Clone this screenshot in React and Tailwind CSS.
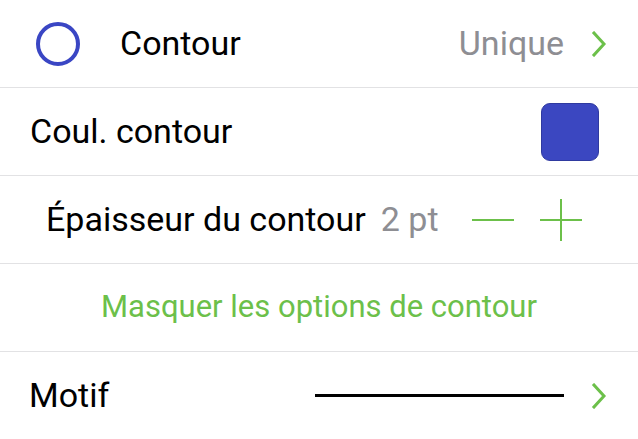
import { useState } from 'react';

const font = { fontFamily: 'Roboto, "Noto Sans", sans-serif' };

function Chevron() {
  return (
    <svg width="16" height="26" viewBox="0 0 16 26" className="shrink-0">
      <path d="M3 2 L13 13 L3 24" fill="none" stroke="#6cc04a" strokeWidth="3" strokeLinecap="square" />
    </svg>
  );
}

function Row({ children, className = '' }) {
  return (
    <div className={`flex h-[88px] items-center border-b border-[#e2e2e4] ${className}`}>
      {children}
    </div>
  );
}

export default function App() {
  const [width, setWidth] = useState(2);

  return (
    <div className="h-[439px] w-[638px] overflow-hidden bg-white text-[34px] text-black" style={font}>
      <Row className="pl-[36px] pr-[31px]">
        <div className="h-[44px] w-[44px] shrink-0 rounded-full border-[4px] border-[#3a46c4]" />
        <span className="ml-[40px] flex-1">Contour</span>
        <span className="mr-[27px] text-[#8e8e93]">Unique</span>
        <Chevron />
      </Row>

      <Row className="pl-[30px] pr-[39px]">
        <span className="flex-1">Coul. contour</span>
        <div className="h-[58px] w-[58px] rounded-[9px] border border-[#2f3aa0] bg-[#3b47c1]" />
      </Row>

      <Row className="pl-[46px] pr-[56px]">
        <span>Épaisseur du contour</span>
        <span className="ml-[15px] text-[#8e8e93]">{width} pt</span>
        <div className="flex-1" />
        <button className="flex h-[42px] w-[42px] items-center" onClick={() => setWidth((w) => Math.max(0, w - 1))}>
          <span className="h-[2px] w-[42px] bg-[#6cc04a]" />
        </button>
        <button className="relative ml-[26px] h-[42px] w-[42px]" onClick={() => setWidth((w) => w + 1)}>
          <span className="absolute left-0 top-[20px] h-[2px] w-[42px] bg-[#6cc04a]" />
          <span className="absolute left-[20px] top-0 h-[42px] w-[2px] bg-[#6cc04a]" />
        </button>
      </Row>

      <Row className="justify-center">
        <span className="text-[31px] text-[#6cc04a]">Masquer les options de contour</span>
      </Row>

      <div className="flex h-[87px] items-center pl-[29px] pr-[31px]">
        <span className="flex-1">Motif</span>
        <span className="mr-[27px] h-[3px] w-[249px] bg-black" />
        <Chevron />
      </div>
    </div>
  );
}
